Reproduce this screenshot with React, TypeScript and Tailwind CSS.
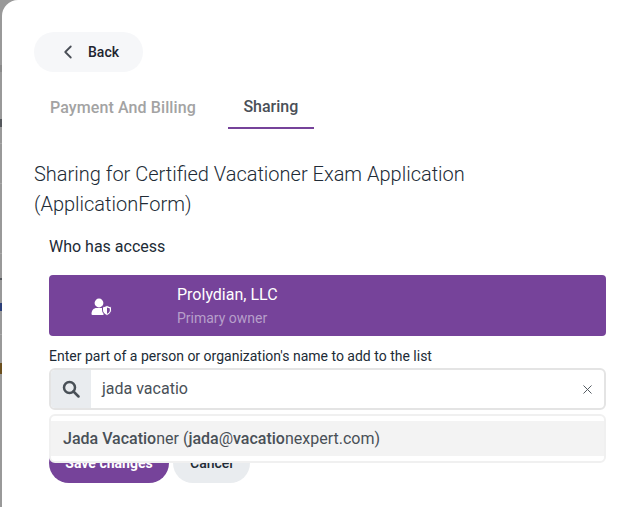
import { ChevronLeft, X } from "lucide-react";

// bits of the page behind the dialog, showing in the strip on the left
const behind = [
  { top: "top-[65px]", height: "h-[7px]", color: "bg-[#8a8a8a]" },
  { top: "top-[119px]", height: "h-[8px]", color: "bg-[#55585c]" },
  { top: "top-[143px]", height: "h-[1px]", color: "bg-[#a8a8a8]" },
  { top: "top-[183px]", height: "h-[1px]", color: "bg-[#a8a8a8]" },
  { top: "top-[253px]", height: "h-[1px]", color: "bg-[#a8a8a8]" },
  { top: "top-[278px]", height: "h-[2px]", color: "bg-[#55585c]" },
  { top: "top-[303px]", height: "h-[8px]", color: "bg-[#2b3f78]" },
  { top: "top-[334px]", height: "h-[1px]", color: "bg-[#a8a8a8]" },
  { top: "top-[363px]", height: "h-[11px]", color: "bg-[#6b4f1e]" },
];

function OwnerIcon() {
  return (
    <svg width="22" height="18" viewBox="0 0 22 18">
      <circle cx="8" cy="5" r="4.4" fill="#fff" />
      <path d="M0.5 16c0-4 2.5-6 5-6h5c1 0 1.5.3 2 .6v6.4H2c-1 0-1.5-.4-1.5-1z" fill="#fff" />
      <path d="M16 7.5l4.5 1.6v3c0 2.7-2 4.400-4.500 5.400-2.500-1-4.500-2.700-4.500-5.400v-3z" fill="#fff" stroke="#76439a" strokeWidth="1" />
      <path d="M16 9.500l2.800 1v1.700c0 1.700-1.200 2.800-2.800 3.500z" fill="#76439a" />
    </svg>
  );
}

export default function App() {
  return (
    <div className="relative h-[507px] w-[631px] overflow-hidden bg-[#999999] font-['Roboto',sans-serif]">
      {behind.map((b) => (
        <span key={b.top} className={`absolute left-0 w-[2px] ${b.top} ${b.height} ${b.color}`} />
      ))}
      <div className="relative ml-[2px] h-[507px] rounded-tl-[16px] bg-white pl-[32px] pt-[32px]">
        <button className="flex h-[40px] w-[109px] items-center rounded-[20px] bg-[#f6f7f9] pl-[23px] text-[14px] font-medium text-[#1f2530]">
          <ChevronLeft size={22} strokeWidth={2} className="text-[#4a4f57]" />
          <span className="ml-[9px]">Back</span>
        </button>

        <div className="mt-[12px] flex h-[45px] text-[16px] font-medium">
          <div className="ml-[16px] flex items-center pt-[2px] tracking-[0.1px] text-[#a3a3a3]">Payment And Billing</div>
          <div className="ml-[32px] flex w-[86px] items-center justify-center border-b-2 border-[#76439a] pt-[2px] text-[#4a4f57]">Sharing</div>
        </div>

        <h2 className="mt-[30px] w-[520px] text-[20px] font-light leading-[30px] text-[#212b36]">
          Sharing for Certified Vacationer Exam Application (ApplicationForm)
        </h2>

        <div className="ml-[15px] mr-[25px]">
          <div className="mt-[16px] text-[16px] leading-[24px] text-[#212b36]">Who has access</div>

          <div className="mt-[16px] flex h-[61px] items-center rounded-[4px] bg-[#76439a]">
            <div className="flex w-[128px] justify-center pr-[22px] pt-[2px]">
              <OwnerIcon />
            </div>
            <div>
              <div className="text-[16px] leading-[22px] text-white">Prolydian, LLC</div>
              <div className="mt-[2px] text-[14px] leading-[20px] text-[#b79fca]">Primary owner</div>
            </div>
          </div>

          <div className="mt-[10px] text-[14px] leading-[20px] text-[#212b36]">
            Enter part of a person or organization's name to add to the list
          </div>

          <div className="relative mt-[2px]">
            <div className="flex h-[42px] overflow-hidden rounded-[6px] border-2 border-[#e4e4e4]">
              <div className="flex w-[40px] items-center justify-center bg-[#e9ecef]">
                <svg width="18" height="18" viewBox="0 0 18 18" fill="none" stroke="#495057" strokeWidth="2.500">
                  <circle cx="7.500" cy="7.500" r="5.500" />
                  <path d="M11.500 11.500l5 5" strokeLinecap="round" />
                </svg>
              </div>
              <div className="flex flex-1 items-center justify-between pl-[11px] pr-[9px] text-[16px] text-[#495057]">
                <span>jada vacatio</span>
                <X size={15} strokeWidth={1.5} className="text-[#495057]" />
              </div>
            </div>

            <div className="mt-[33px] flex gap-[4px]">
              <button className="h-[40px] w-[120px] rounded-[20px] bg-[#76439a] text-[14px] font-bold text-white">Save changes</button>
              <button className="h-[40px] w-[77px] rounded-[20px] bg-[#e9ecef] text-[14px] font-medium text-[#212b36]">Cancel</button>
            </div>

            <div className="absolute left-0 right-0 top-[46px] rounded-[6px] border-2 border-[#f0f0f0] bg-white py-[5px]">
              <div className="flex h-[35px] items-center bg-[#f3f3f3] pl-[12px] text-[16px] text-[#495057]">
                <span>
                  <b className="font-medium">Jada Vacatio</b>ner (<b className="font-medium">jada</b>@<b className="font-medium">vacatio</b>nexpert.com)
                </span>
              </div>
            </div>
          </div>
        </div>
      </div>
    </div>
  );
}
